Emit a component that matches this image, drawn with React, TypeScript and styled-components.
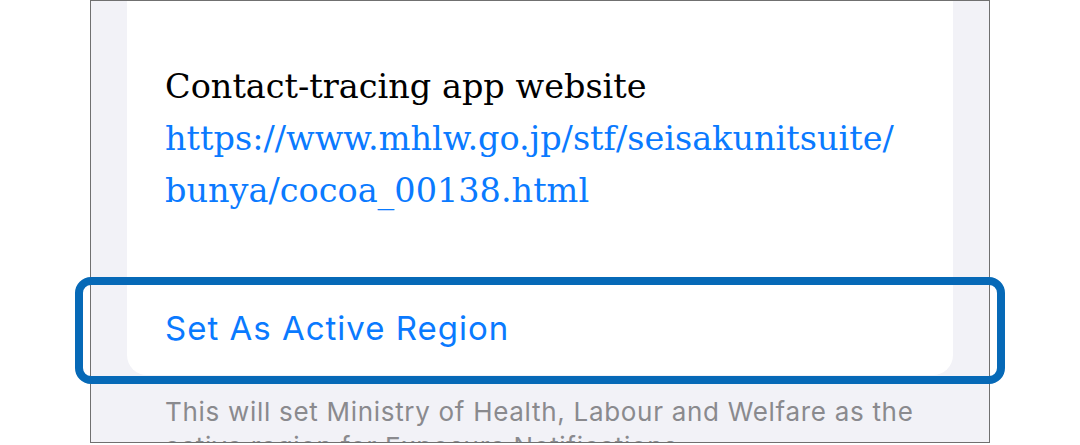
import styled, { createGlobalStyle } from 'styled-components';

const GlobalStyle = createGlobalStyle`
  html, body {
    margin: 0;
    padding: 0;
    background: #ffffff;
  }
`;

const Page = styled.div`
  position: relative;
  width: 1080px;
  height: 445px;
  overflow: hidden;
  background: #ffffff;
`;

const PhoneFrame = styled.div`
  box-sizing: border-box;
  margin-left: 90px;
  width: 900px;
  height: 443px;
  border: 1px solid #707070;
  background: #f2f2f7;
  padding: 0 36px;
  overflow: hidden;
`;

const Card = styled.div`
  background: #ffffff;
  border-radius: 0 0 20px 20px;
  margin-top: -45px;
`;

const InfoSection = styled.div`
  padding: 0 38px 64px;
`;

const InfoLine = styled.div<{ $link?: boolean }>`
  font-family: "DejaVu Serif", "Liberation Serif", serif;
  font-size: 33.5px;
  line-height: 52px;
  white-space: nowrap;
  color: ${(p) => (p.$link ? '#0a7aff' : '#000000')};
`;

const Spacer = styled.div`
  height: 53px;
`;

const ActionRow = styled.div`
  height: 94px;
  padding: 0 38px;
  display: flex;
  align-items: center;
  font-family: Inter, "Open Sans", sans-serif;
  font-size: 33px;
  letter-spacing: 1px;
  color: #0a7aff;
`;

const Footer = styled.div`
  padding: 19px 38px 0;
  font-family: Inter, "Open Sans", sans-serif;
  font-size: 26px;
  line-height: 35px;
  letter-spacing: 0.7px;
  color: #8a8a8e;
`;

const Highlight = styled.div`
  position: absolute;
  box-sizing: border-box;
  left: 75px;
  top: 277px;
  width: 930px;
  height: 107px;
  border: 8px solid #0669b7;
  border-radius: 16px;
  pointer-events: none;
`;

export default function App() {
  return (
    <Page>
      <GlobalStyle />
      <PhoneFrame>
        <Card>
          <InfoSection>
            <InfoLine>Setting up</InfoLine>
            <Spacer />
            <InfoLine>Contact-tracing app website</InfoLine>
            <InfoLine $link>https://www.mhlw.go.jp/stf/seisakunitsuite/</InfoLine>
            <InfoLine $link>bunya/cocoa_00138.html</InfoLine>
          </InfoSection>
          <ActionRow>Set As Active Region</ActionRow>
        </Card>
        <Footer>
          This will set Ministry of Health, Labour and Welfare as the active region for Exposure Notifications.
        </Footer>
      </PhoneFrame>
      <Highlight />
    </Page>
  );
}
